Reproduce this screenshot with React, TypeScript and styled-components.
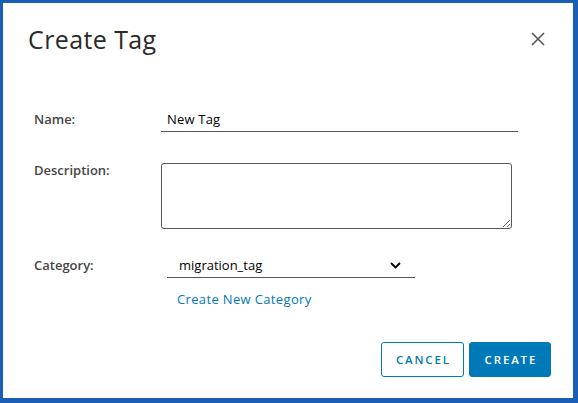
import React from "react";
import styled, { createGlobalStyle } from "styled-components";

const GlobalStyle = createGlobalStyle`
  html, body {
    margin: 0;
    padding: 0;
    background: #ffffff;
  }
  * {
    box-sizing: border-box;
  }
`;

const Frame = styled.div`
  width: 578px;
  height: 403px;
  border-style: solid;
  border-color: #1c5db5;
  border-width: 3px 5px 5px 3px;
  background: #ffffff;
  display: flex;
  flex-direction: column;
  font-family: "Open Sans", "Liberation Sans", sans-serif;
`;

const Header = styled.div`
  display: flex;
  align-items: center;
  justify-content: space-between;
  padding: 20px 24px 0 25px;
`;

const Title = styled.h3`
  margin: 0;
  font-size: 25px;
  line-height: 32px;
  font-weight: 400;
  letter-spacing: 0.4px;
  color: #2b2b2b;
`;

const CloseButton = styled.button`
  width: 22px;
  height: 22px;
  padding: 0;
  border: 0;
  background: none;
  display: flex;
  align-items: center;
  justify-content: center;
  cursor: pointer;
`;

const Body = styled.div`
  padding: 52px 0 0 31px;
  display: flex;
  flex-direction: column;
`;

const FieldRow = styled.div<{ $gap?: number }>`
  display: grid;
  grid-template-columns: 127px auto;
  align-items: start;
  margin-top: ${(p) => p.$gap ?? 0}px;
`;

const Label = styled.label<{ $lh?: number }>`
  font-size: 13px;
  font-weight: 600;
  color: #454545;
  line-height: ${(p) => p.$lh ?? 24}px;
`;

const TextInput = styled.input`
  width: 357px;
  height: 25px;
  border: 0;
  border-bottom: 1px solid #565656;
  padding: 0 6px;
  font-family: inherit;
  font-size: 13px;
  letter-spacing: 0.2px;
  color: #000000;
  outline: none;
  background: transparent;
`;

const TextArea = styled.textarea`
  width: 351px;
  height: 66px;
  border: 1px solid #565656;
  border-radius: 3px;
  font-family: inherit;
  font-size: 13px;
  padding: 4px 6px;
  outline: none;
  display: block;
`;

const SelectBox = styled.div`
  margin-left: 6px;
  width: 248px;
  height: 25px;
  border-bottom: 1px solid #565656;
  display: flex;
  align-items: center;
  justify-content: space-between;
  padding: 0 14px 0 12px;
  font-size: 13px;
  color: #000000;
`;

const LinkRow = styled.div`
  margin: 9px 0 0 143px;
`;

const Link = styled.a`
  font-size: 13px;
  line-height: 16px;
  letter-spacing: 0.35px;
  color: #0079b8;
  text-decoration: none;
  cursor: pointer;
`;

const Footer = styled.div`
  margin-top: auto;
  padding: 0 22px 21px 0;
  display: flex;
  justify-content: flex-end;
  gap: 5px;
`;

const Button = styled.button<{ $primary?: boolean }>`
  height: 35px;
  width: ${(p) => (p.$primary ? 82 : 83)}px;
  padding: 0;
  border-radius: 3px;
  border: 1px solid #0079b8;
  background: ${(p) => (p.$primary ? "#0079b8" : "#ffffff")};
  color: ${(p) => (p.$primary ? "#ffffff" : "#0079b8")};
  font-family: inherit;
  font-size: 11.5px;
  font-weight: 600;
  letter-spacing: 0.16em;
  text-indent: 0.16em;
  cursor: pointer;
`;

const CloseIcon = () => (
  <svg width="14" height="14" viewBox="0 0 14 14">
    <path d="M1 1 L13 13 M13 1 L1 13" stroke="#565656" strokeWidth="1.6" fill="none" />
  </svg>
);

const Chevron = () => (
  <svg width="11" height="7" viewBox="0 0 11 7">
    <path d="M1 1 L5.5 5.5 L10 1" stroke="#000000" strokeWidth="1.8" fill="none" />
  </svg>
);

export default function App() {
  return (
    <>
      <GlobalStyle />
      <Frame>
        <Header>
          <Title>Create Tag</Title>
          <CloseButton aria-label="Close">
            <CloseIcon />
          </CloseButton>
        </Header>
        <Body>
          <FieldRow>
            <Label>Name:</Label>
            <TextInput defaultValue="New Tag" />
          </FieldRow>
          <FieldRow $gap={31}>
            <Label $lh={14}>Description:</Label>
            <TextArea />
          </FieldRow>
          <FieldRow $gap={24}>
            <Label>Category:</Label>
            <SelectBox>
              <span>migration_tag</span>
              <Chevron />
            </SelectBox>
          </FieldRow>
          <LinkRow>
            <Link>Create New Category</Link>
          </LinkRow>
        </Body>
        <Footer>
          <Button>CANCEL</Button>
          <Button $primary>CREATE</Button>
        </Footer>
      </Frame>
    </>
  );
}
